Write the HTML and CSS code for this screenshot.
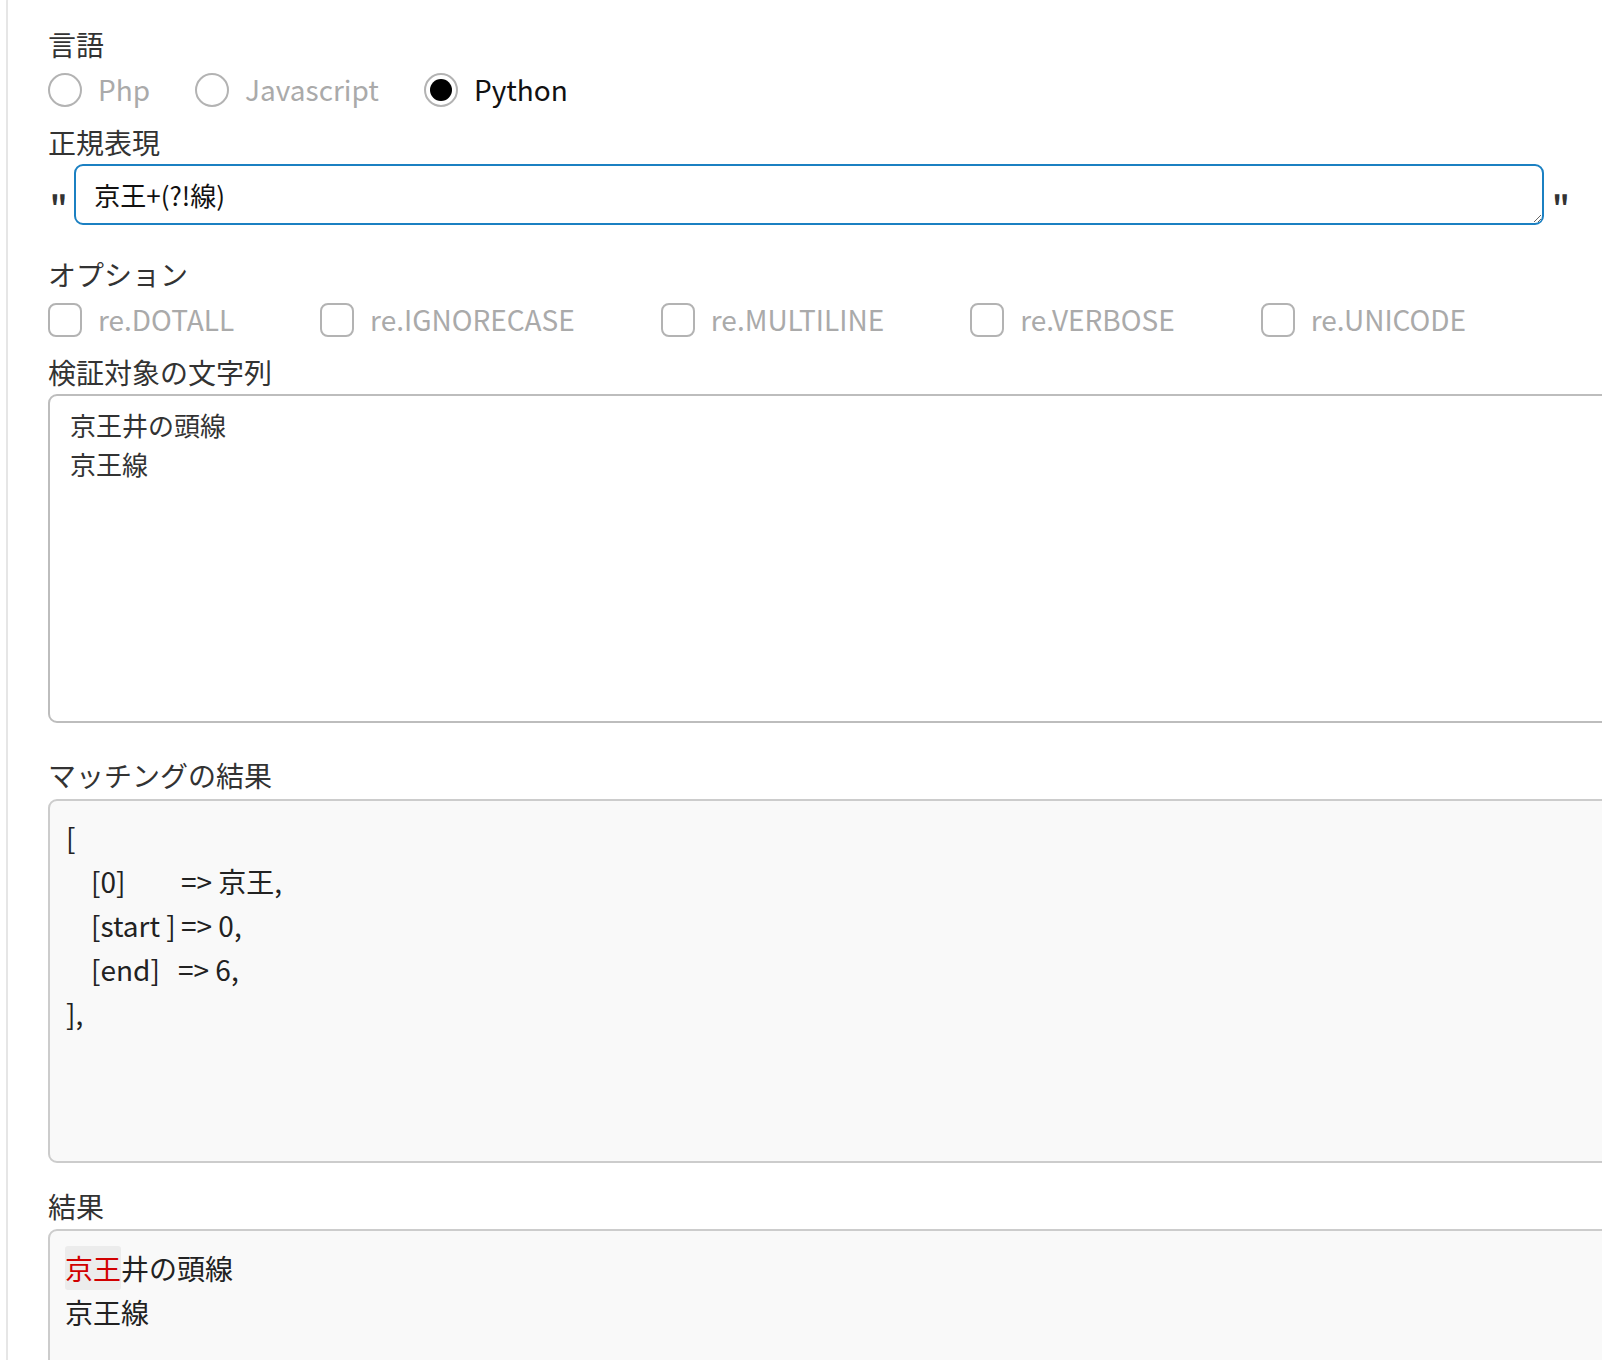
FILE: index.html
```html
<!DOCTYPE html>
<html lang="ja">
<head>
<meta charset="utf-8">
<title>正規表現チェッカー</title>
<link rel="stylesheet" href="styles.css">
</head>
<body>
<div class="panel">
  <div class="field-label">言語</div>
  <div class="choice-row radio-row">
    <label class="choice"><span class="radio"></span><span class="choice-text">Php</span></label>
    <label class="choice"><span class="radio"></span><span class="choice-text">Javascript</span></label>
    <label class="choice is-on"><span class="radio"><span class="radio-dot"></span></span><span class="choice-text">Python</span></label>
  </div>

  <div class="field-label label-gap-s">正規表現</div>
  <div class="pattern-row">
    <span class="quote quote-left">"</span>
    <textarea class="pattern-input" rows="1">京王+(?!線)</textarea>
    <span class="quote quote-right">"</span>
  </div>

  <div class="field-label label-gap-m">オプション</div>
  <div class="choice-row check-row">
    <label class="choice"><span class="checkbox"></span><span class="choice-text">re.DOTALL</span></label>
    <label class="choice"><span class="checkbox"></span><span class="choice-text">re.IGNORECASE</span></label>
    <label class="choice"><span class="checkbox"></span><span class="choice-text">re.MULTILINE</span></label>
    <label class="choice"><span class="checkbox"></span><span class="choice-text">re.VERBOSE</span></label>
    <label class="choice"><span class="checkbox"></span><span class="choice-text">re.UNICODE</span></label>
  </div>

  <div class="field-label label-gap-s">検証対象の文字列</div>
  <textarea class="subject-input">京王井の頭線
京王線</textarea>

  <div class="field-label label-gap-l">マッチングの結果</div>
  <div class="match-box">
    <div class="code-line">[</div>
    <div class="code-line indent"><span class="key">[0]</span>=&gt; 京王,</div>
    <div class="code-line indent"><span class="key">[start ]</span>=&gt; 0,</div>
    <div class="code-line indent"><span class="key key-short">[end]</span>=&gt; 6,</div>
    <div class="code-line">],</div>
  </div>

  <div class="field-label label-gap-r">結果</div>
  <div class="result-box">
    <div class="result-line"><span class="hit">京王</span>井の頭線</div>
    <div class="result-line">京王線</div>
  </div>
</div>
</body>
</html>
```

FILE: styles.css
```css
html {
  overflow: hidden;
}

body {
  margin: 0;
  background: #ffffff;
  font-family: "Noto Sans CJK JP", "Noto Sans", sans-serif;
  color: #333333;
}

.panel {
  margin: -12px 0 0 6px;
  border: 2px solid #e6e6e6;
  border-right: none;
  border-radius: 14px 0 0 0;
  padding: 36px 0 0 40px;
  min-height: 1400px;
}

.field-label {
  font-size: 28px;
  line-height: 36px;
  padding-bottom: 4px;
  color: #333333;
}

.label-gap-s { margin-top: 14px; }
.label-gap-m { margin-top: 31px; }
.label-gap-l { margin-top: 34px; }
.label-gap-r { margin-top: 25px; }

.choice-row {
  display: flex;
  align-items: center;
  height: 40px;
  margin-top: 4px;
}

.choice {
  display: flex;
  align-items: center;
}

.radio-row .choice { margin-right: 45px; }
.check-row .choice { margin-right: 86px; }

.choice-text {
  font-size: 28px;
  line-height: 38px;
  padding-bottom: 2px;
  color: #aaaaaa;
  margin-left: 16px;
}

.choice.is-on .choice-text {
  color: #111111;
}

.radio {
  width: 34px;
  height: 34px;
  box-sizing: border-box;
  border: 2px solid #b3b3b3;
  border-radius: 50%;
  display: flex;
  align-items: center;
  justify-content: center;
}

.radio-dot {
  width: 22px;
  height: 22px;
  border-radius: 50%;
  background: #000000;
}

.checkbox {
  width: 34px;
  height: 34px;
  box-sizing: border-box;
  border: 2px solid #b3b3b3;
  border-radius: 8px;
}

.pattern-row {
  display: flex;
  align-items: flex-start;
}

.quote {
  font-size: 30px;
  font-weight: 700;
  line-height: 30px;
  color: #333333;
  margin-top: 29px;
}

.quote-left { margin-left: 2px; margin-right: 7px; }
.quote-right { margin-left: 8px; }

.pattern-input {
  display: block;
  width: 1470px;
  height: 61px;
  box-sizing: border-box;
  margin: 0;
  padding: 9px 18px;
  border: 2px solid #1b80c2;
  border-radius: 9px;
  outline: none;
  font-family: "Noto Sans CJK JP", "Noto Sans", sans-serif;
  font-size: 26px;
  line-height: 39px;
  color: #111111;
  background: #ffffff;
  resize: vertical;
  overflow: hidden;
}

.subject-input {
  display: block;
  width: 1600px;
  height: 329px;
  box-sizing: border-box;
  margin: 0;
  padding: 9px 20px;
  border: 2px solid #bdbdbd;
  border-radius: 9px;
  outline: none;
  font-family: "Noto Sans CJK JP", "Noto Sans", sans-serif;
  font-size: 26px;
  line-height: 39px;
  color: #333333;
  background: #ffffff;
  resize: none;
}

.match-box {
  margin-top: 2px;
  width: 1600px;
  height: 364px;
  box-sizing: border-box;
  padding: 14px 16px;
  border: 2px solid #cccccc;
  border-radius: 9px;
  background: #f9f9f9;
  font-size: 28px;
  line-height: 44px;
  color: #222222;
}

.code-line {
  white-space: pre;
}

.indent {
  padding-left: 25px;
}

.key {
  display: inline-block;
  width: 90px;
}

.key-short {
  width: 87px;
}

.result-box {
  margin-top: 1px;
  width: 1600px;
  height: 200px;
  box-sizing: border-box;
  padding: 15px 15px;
  border: 2px solid #cccccc;
  border-radius: 9px;
  background: #f9f9f9;
  font-size: 28px;
  line-height: 44px;
  color: #222222;
}

.hit {
  color: #d10000;
  background: #ececec;
  border-radius: 3px;
  padding: 2px 0;
}
```
